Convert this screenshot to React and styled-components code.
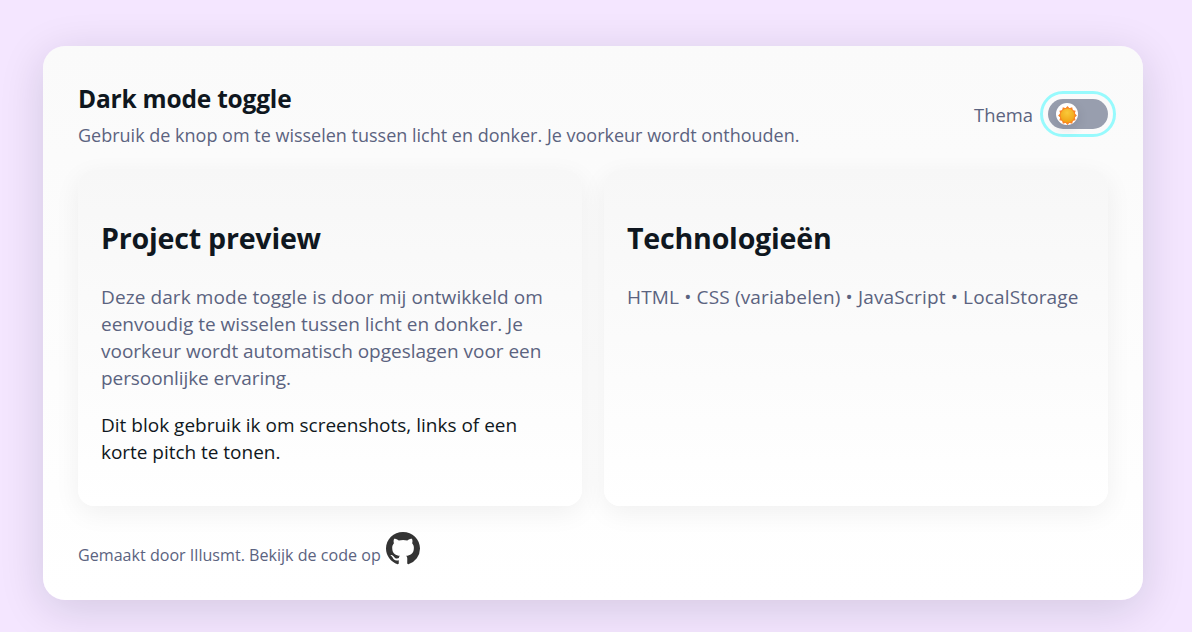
import React, { useState } from "react";
import styled, { createGlobalStyle } from "styled-components";

const GlobalStyle = createGlobalStyle`
  *, *::before, *::after { box-sizing: border-box; }
  body {
    margin: 0;
    background: #f4e6ff;
    color: #0f1720;
    font-family: "Segoe UI", "Open Sans", "Noto Sans", sans-serif;
  }
`;

const Page = styled.div`
  min-height: 632px;
  padding: 46px 49px 32px 43px;
`;

const Panel = styled.main`
  height: 554px;
  padding: 35px;
  border-radius: 22px;
  background: linear-gradient(180deg, #fafafa, #ffffff);
  box-shadow: 0 9px 45px rgba(16, 24, 40, 0.14);
`;

const Header = styled.header`
  display: flex;
  justify-content: space-between;
  align-items: center;
  height: 67px;
  margin-bottom: 22px;
`;

const Title = styled.h1`
  margin: 0 0 7px;
  font-size: 24.5px;
  line-height: 34px;
  letter-spacing: -0.2px;
`;

const Subtitle = styled.p`
  margin: 0;
  color: #5b6380;
  font-size: 18px;
  line-height: 25px;
`;

const ThemeControl = styled.div`
  display: flex;
  align-items: center;
  gap: 15px;
  margin-bottom: 1px;
  color: #5b6380;
  font-size: 18.4px;
`;

const Switch = styled.button`
  display: flex;
  align-items: center;
  width: 60px;
  height: 30px;
  padding: 0 8px;
  border: 0;
  border-radius: 15px;
  background: #989eae;
  outline: 3px solid #97fafd;
  outline-offset: 5px;
  cursor: pointer;
`;

const Thumb = styled.span`
  display: flex;
  align-items: center;
  justify-content: center;
  width: 22px;
  height: 22px;
  padding: 2px 0 0 1px;
  border-radius: 50%;
  background: #fff;
  box-shadow: 0 4px 12px rgba(16, 24, 40, 0.12);
  transform: translateX(${(p) => (p.$on ? "22px" : "0")});
`;

const Cards = styled.section`
  display: grid;
  grid-template-columns: 1fr 1fr;
  gap: 22px;
  height: 336px;
`;

const Card = styled.article`
  padding: 23px 23px 19px;
  border-radius: 16px;
  background: linear-gradient(180deg, #f7f7f7, #ffffff);
  box-shadow: 0 7px 27px rgba(0, 0, 0, 0.06);
`;

const CardTitle = styled.h2`
  margin: 24px 0 25px;
  font-size: 28.6px;
  line-height: 42px;
  letter-spacing: -0.22px;
`;

const Text = styled.p`
  margin: 0 0 20px;
  color: ${(p) => (p.$muted ? "#5b6380" : "#0f1720")};
  font-size: 19px;
  line-height: 27px;
  white-space: nowrap;
`;

const Line = styled.span`
  display: block;
  letter-spacing: ${(p) => p.$tracking || 0}px;
`;

const Footer = styled.footer`
  display: flex;
  align-items: flex-start;
  gap: 5px;
  margin-top: 26px;
  color: #5b6380;
  font-size: 16.1px;
`;

const FooterText = styled.span`
  padding-top: 12px;
  line-height: 22px;
`;

const RepoLink = styled.a`
  display: flex;
  color: #333;
`;

const rays = Array.from({ length: 12 }, (_, i) => i * 30);

function Sun() {
  return (
    <svg width="19" height="19" viewBox="-10 -10 20 20" aria-hidden="true">
      <defs>
        <radialGradient id="sun" cx="48%" cy="30%" r="75%">
          <stop offset="0" stopColor="#f9c93a" />
          <stop offset="1" stopColor="#f0a012" />
        </radialGradient>
      </defs>
      {rays.map((a) => (
        <path key={a} d="M-2.8-6.8L0-9.9L2.8-6.8Z" fill="#fa8424" transform={`rotate(${a})`} />
      ))}
      <circle r="8.2" fill="#fa8424" />
      <circle r="7.3" fill="url(#sun)" />
    </svg>
  );
}

function GithubMark() {
  return (
    <svg width="34" height="33" viewBox="0 0 16 16" fill="currentColor" aria-label="GitHub" preserveAspectRatio="none">
      <path d="M8 0C3.58 0 0 3.58 0 8c0 3.54 2.29 6.53 5.47 7.59.4.07.55-.17.55-.38 0-.19-.01-.82-.01-1.49-2.01.37-2.53-.49-2.69-.94-.09-.23-.48-.94-.82-1.13-.28-.15-.68-.52-.01-.53.63-.01 1.08.58 1.23.82.72 1.21 1.87.87 2.33.66.07-.52.28-.87.51-1.07-1.78-.2-3.64-.89-3.64-3.95 0-.87.31-1.59.82-2.15-.08-.2-.36-1.02.08-2.12 0 0 .67-.21 2.2.82.64-.18 1.32-.27 2-.27s1.36.09 2 .27c1.53-1.04 2.2-.82 2.2-.82.44 1.1.16 1.92.08 2.12.51.56.82 1.27.82 2.15 0 3.07-1.87 3.75-3.65 3.95.29.25.54.73.54 1.48 0 1.07-.01 1.93-.01 2.2 0 .21.15.46.55.38A8.01 8.01 0 0 0 16 8c0-4.42-3.58-8-8-8z" />
    </svg>
  );
}

export default function App() {
  const [on, setOn] = useState(false);
  return (
    <Page>
      <GlobalStyle />
      <Panel>
        <Header>
          <div>
            <Title>Dark mode toggle</Title>
            <Subtitle>
              Gebruik de knop om te wisselen tussen licht en donker. Je voorkeur wordt onthouden.
            </Subtitle>
          </div>
          <ThemeControl>
            <span>Thema</span>
            <Switch role="switch" aria-checked={on} onClick={() => setOn(!on)}>
              <Thumb $on={on}>
                <Sun />
              </Thumb>
            </Switch>
          </ThemeControl>
        </Header>
        <Cards>
          <Card>
            <CardTitle>Project preview</CardTitle>
            <Text $muted>
              <Line $tracking={0.09}>Deze dark mode toggle is door mij ontwikkeld om </Line>
              <Line>eenvoudig te wisselen tussen licht en donker. Je </Line>
              <Line $tracking={-0.02}>voorkeur wordt automatisch opgeslagen voor een </Line>
              <Line $tracking={-0.08}>persoonlijke ervaring.</Line>
            </Text>
            <Text>
              <Line>Dit blok gebruik ik om screenshots, links of een </Line>
              <Line $tracking={-0.03}>korte pitch te tonen.</Line>
            </Text>
          </Card>
          <Card>
            <CardTitle>Technologieën</CardTitle>
            <Text $muted>
              <Line $tracking={0.15}>HTML • CSS (variabelen) • JavaScript • LocalStorage</Line>
            </Text>
          </Card>
        </Cards>
        <Footer>
          <FooterText>Gemaakt door Illusmt. Bekijk de code op</FooterText>
          <RepoLink href="#">
            <GithubMark />
          </RepoLink>
        </Footer>
      </Panel>
    </Page>
  );
}
